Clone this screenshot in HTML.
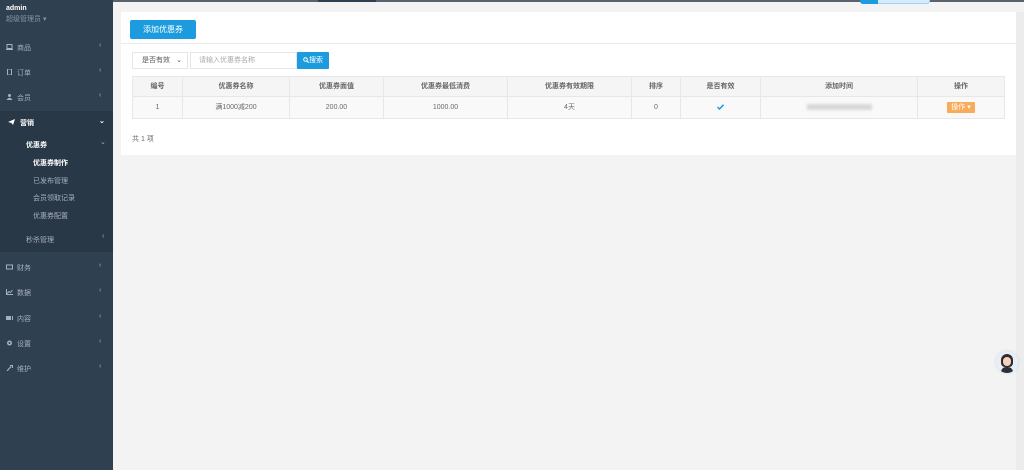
<!DOCTYPE html>
<html><head><meta charset="utf-8"><style>
*{margin:0;padding:0;box-sizing:border-box}
body{width:1024px;height:470px;overflow:hidden;background:#f3f3f4;font-family:"Liberation Sans","Noto Sans CJK SC",sans-serif;font-size:7px;color:#676a6c;position:relative}
.sb{position:absolute;left:0;top:0;width:113px;height:470px;background:#2f4050;color:#a7b1c2}
.sb .u{position:absolute;left:6px;top:5px;color:#fff;font-weight:bold;font-size:7px}
.sb .r{position:absolute;left:6px;top:14px;font-size:7px;color:#8a96a6}
.it{position:absolute;left:0;width:113px;height:20px;font-size:7px;color:#a7b1c2}
.it .ic{position:absolute;left:6px;top:6px;width:7px;height:6px}
.it .t{position:absolute;left:17px;top:5px}
.it .a{position:absolute;left:99px;top:4px;font-size:7px}
.act{position:absolute;left:0;top:111px;width:113px;height:141px;background:#293846}
.sub{position:absolute;font-size:7px;color:#a7b1c2}
.main-top{position:absolute;left:113px;top:0;width:911px;height:2px;background:#5a636d}
.panel{position:absolute;left:121px;top:12px;width:895px;height:143px;background:#fff}
.btn{position:absolute;left:9px;top:8px;width:66px;height:19px;background:#1c9cde;color:#fff;font-size:8px;text-align:center;line-height:19px;border-radius:2px}
.hr{position:absolute;left:0;top:31px;width:895px;height:1px;background:#eaeaea}
.sel{position:absolute;left:11px;top:40px;width:56px;height:17px;border:1px solid #e5e6e7;font-size:7px;color:#555;line-height:15px;padding-left:9px}
.inp{position:absolute;left:69px;top:40px;width:107px;height:17px;border:1px solid #e5e6e7;font-size:7px;color:#aaa;line-height:15px;padding-left:8px}
.sbtn{position:absolute;left:176px;top:40px;width:32px;height:17px;background:#1c9cde;color:#fff;font-size:7px;line-height:17px;text-align:center;border-radius:1px}
table{position:absolute;left:11px;top:64px;border-collapse:collapse;font-size:7px;color:#676a6c}
td{border:1px solid #e7e7e7;text-align:center;padding:0;vertical-align:middle;line-height:10px}
tr.h td{height:20px;background:#f5f5f6;font-weight:bold;color:#666}
tr.d td{height:22px;background:#f9f9f9}
.blur{display:inline-block;width:65px;height:6px;background:#d8d8d8;filter:blur(1.2px);vertical-align:middle}
.op{display:inline-block;background:#f8ac59;color:#fff;padding:0 4px;height:11px;line-height:11px;font-size:7px;border-radius:1px;vertical-align:middle}
.tot{position:absolute;left:11px;top:122px;font-size:7px}
</style></head><body>
<div class="sb">
 <div class="u">admin</div><div class="r">超级管理员 ▾</div>
 <div class="act"></div>
 <div class="it" style="top:38px"><svg class="ic" viewBox="0 0 7 6"><rect x="1" y="0.5" width="5" height="4" fill="none" stroke="#a7b1c2"/><rect x="0" y="5" width="7" height="1" fill="#a7b1c2"/></svg><span class="t">商品</span><span class="a">‹</span></div>
 <div class="it" style="top:63px"><svg class="ic" viewBox="0 0 7 6"><rect x="1.5" y="0" width="4" height="6" fill="none" stroke="#a7b1c2"/></svg><span class="t">订单</span><span class="a">‹</span></div>
 <div class="it" style="top:88px"><svg class="ic" viewBox="0 0 7 6"><circle cx="3.5" cy="1.5" r="1.5" fill="#a7b1c2"/><path d="M0.5 6 Q3.5 1.5 6.5 6Z" fill="#a7b1c2"/></svg><span class="t">会员</span><span class="a">‹</span></div>
 <div class="it" style="top:113px;color:#fff;font-weight:bold"><svg class="ic" viewBox="0 0 7 6" style="left:8px"><path d="M0 3 L7 0 L5 6 L3.5 4 Z" fill="#fff"/></svg><span class="t" style="left:20px">营销</span><span class="a">⌄</span></div>
 <div class="sub" style="left:26px;top:140px;color:#fff;font-weight:bold">优惠券</div><div class="sub" style="left:100px;top:138px">⌄</div>
 <div class="sub" style="left:33px;top:158px;color:#fff;font-weight:bold">优惠券制作</div>
 <div class="sub" style="left:33px;top:176px">已发布管理</div>
 <div class="sub" style="left:33px;top:193px">会员领取记录</div>
 <div class="sub" style="left:33px;top:211px">优惠券配置</div>
 <div class="sub" style="left:26px;top:235px">秒杀管理</div><div class="sub" style="left:102px;top:233px">‹</div>
 <div class="it" style="top:258px"><svg class="ic" viewBox="0 0 7 6"><rect x="0.5" y="1" width="6" height="4" fill="none" stroke="#a7b1c2"/></svg><span class="t">财务</span><span class="a">‹</span></div>
 <div class="it" style="top:283px"><svg class="ic" viewBox="0 0 7 6"><path d="M0.5 0 V5.5 H7 M1 4.5 L3 2.5 L4.5 3.5 L6.5 1" fill="none" stroke="#a7b1c2"/></svg><span class="t">数据</span><span class="a">‹</span></div>
 <div class="it" style="top:309px"><svg class="ic" viewBox="0 0 7 6"><rect x="0" y="1" width="5" height="4" fill="#a7b1c2"/><rect x="6" y="1" width="1" height="4" fill="#a7b1c2"/></svg><span class="t">内容</span><span class="a">‹</span></div>
 <div class="it" style="top:334px"><svg class="ic" viewBox="0 0 7 6"><circle cx="3.5" cy="3" r="2.5" fill="#a7b1c2"/><circle cx="3.5" cy="3" r="1" fill="#2f4050"/></svg><span class="t">设置</span><span class="a">‹</span></div>
 <div class="it" style="top:359px"><svg class="ic" viewBox="0 0 7 6"><path d="M1 6 L5 1.5 M4 0.5 L6.5 0.5 L6.5 3" fill="none" stroke="#a7b1c2" stroke-width="1.2"/></svg><span class="t">维护</span><span class="a">‹</span></div>
</div>
<div class="main-top"></div>
<div style="position:absolute;left:318px;top:0;width:58px;height:2px;background:#2f4050"></div>
<div style="position:absolute;left:860px;top:0;width:70px;height:4px;background:#d7ecfb;border:1px solid #9fd3f7;border-top:none;border-radius:0 0 3px 3px"></div>
<div style="position:absolute;left:860px;top:0;width:18px;height:4px;background:#1c9cde;border-radius:0 0 0 3px"></div>
<div class="panel">
 <div class="btn">添加优惠券</div>
 <div class="hr"></div>
 <div class="sel">是否有效<span style="position:absolute;right:5px;top:0">⌄</span></div>
 <div class="inp">请输入优惠券名称</div>
 <div class="sbtn"><svg width="6" height="6" viewBox="0 0 6 6" style="vertical-align:-0.5px"><circle cx="2.5" cy="2.5" r="1.8" fill="none" stroke="#fff" stroke-width="1"/><path d="M3.8 3.8 L5.6 5.6" stroke="#fff" stroke-width="1.2"/></svg>搜索</div>
 <table>
  <tr class="h"><td style="width:50px">编号</td><td style="width:107px">优惠券名称</td><td style="width:94px">优惠券面值</td><td style="width:124px">优惠券最低消费</td><td style="width:124px">优惠券有效期限</td><td style="width:49px">排序</td><td style="width:80px">是否有效</td><td style="width:157px">添加时间</td><td style="width:87px">操作</td></tr>
  <tr class="d"><td>1</td><td>满1000减200</td><td>200.00</td><td>1000.00</td><td>4天</td><td>0</td><td><svg width="7" height="6" viewBox="0 0 7 6" style="vertical-align:middle"><path d="M0.5 3 L2.5 5 L6.5 0.8" fill="none" stroke="#1c9cde" stroke-width="1.5"/></svg></td><td><span class="blur"></span></td><td><span class="op">操作 ▾</span></td></tr>
 </table>
 <div class="tot">共 1 项</div>
</div>
<div style="position:absolute;left:1016px;top:12px;width:8px;height:458px;background:#ececec"></div>
<div style="position:absolute;left:996px;top:351px;width:22px;height:22px;border-radius:50%;background:#e6eef8;overflow:hidden;box-shadow:0 0 3px #cfd8e6">
 <div style="position:absolute;left:5px;top:3px;width:12px;height:13px;border-radius:6px 6px 4px 4px;background:#3a2a26"></div>
 <div style="position:absolute;left:7px;top:6px;width:8px;height:9px;border-radius:4px;background:#f2d3c2"></div>
 <div style="position:absolute;left:5px;top:16px;width:12px;height:8px;border-radius:5px 5px 0 0;background:#2b2f3a"></div>
</div>
</body></html>
